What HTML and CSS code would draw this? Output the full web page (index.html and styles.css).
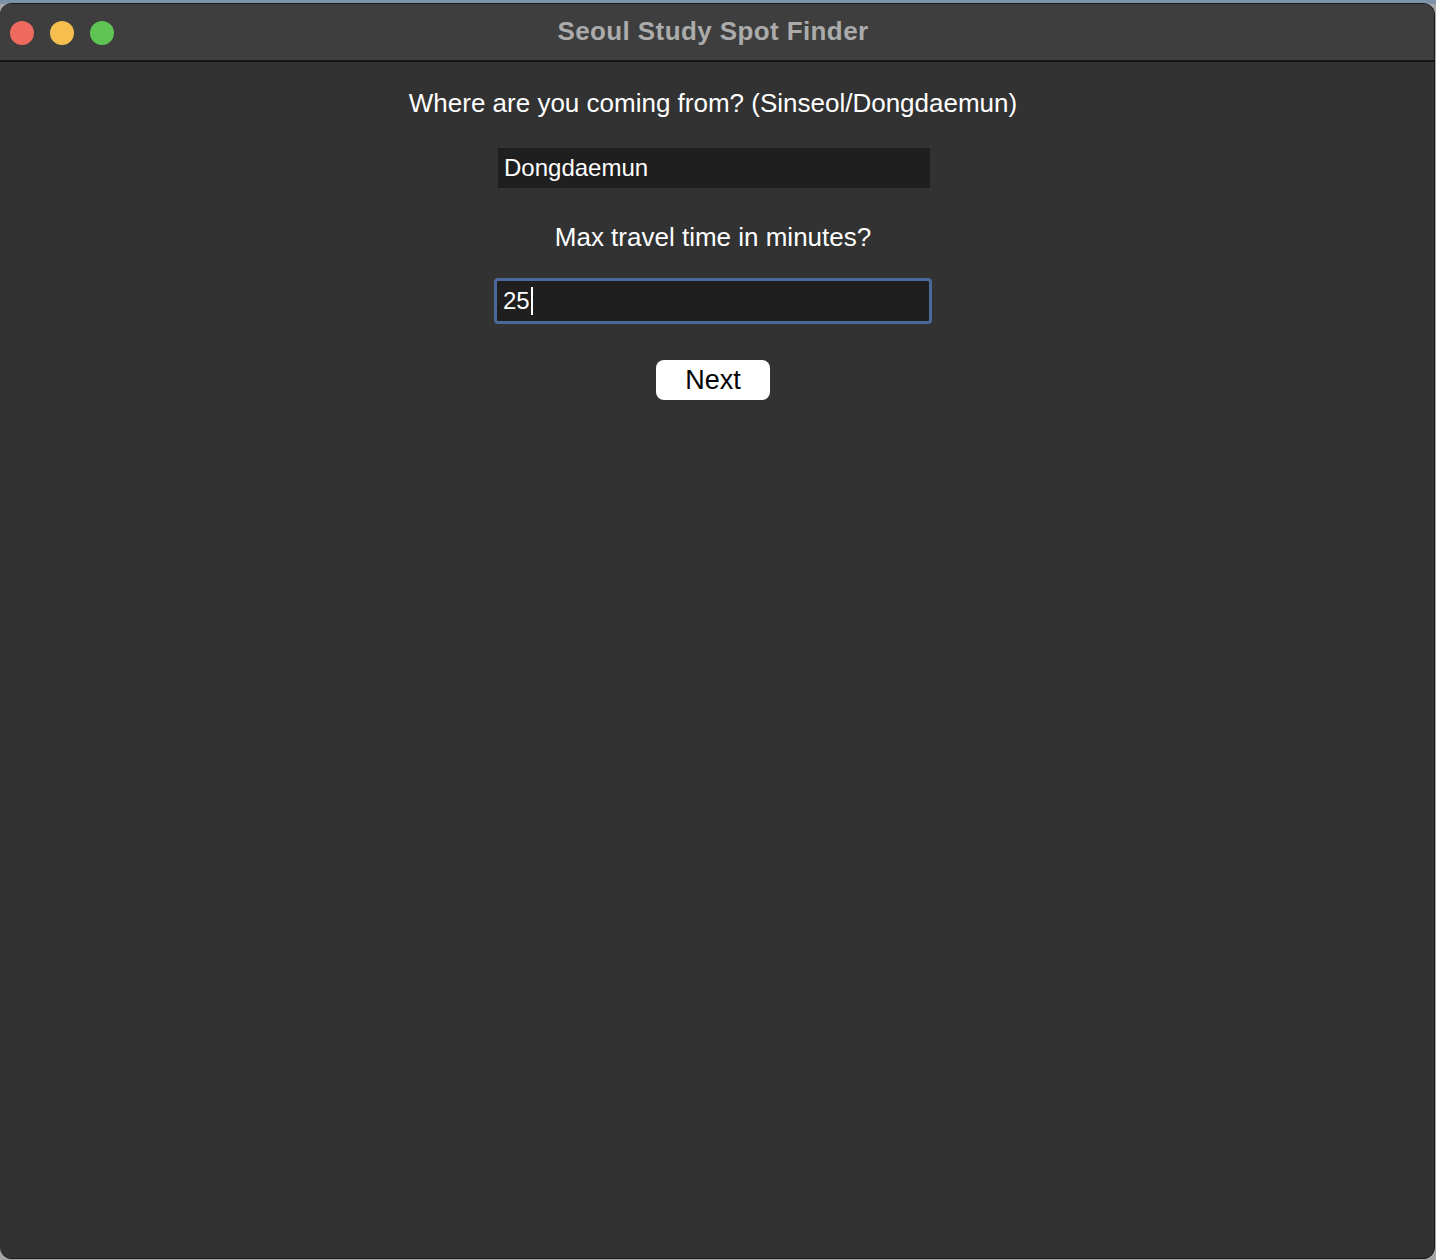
FILE: index.html
```html
<!DOCTYPE html>
<html>
<head>
<meta charset="utf-8">
<link rel="stylesheet" href="styles.css">
</head>
<body>
<div class="window">
  <div class="titlebar">
    <div class="lights">
      <span class="light red"></span>
      <span class="light yellow"></span>
      <span class="light green"></span>
    </div>
    <div class="title">Seoul Study Spot Finder</div>
  </div>
  <div class="content">
    <div class="label label-first">Where are you coming from? (Sinseol/Dongdaemun)</div>
    <div class="field">Dongdaemun</div>
    <div class="label label-second">Max travel time in minutes?</div>
    <div class="field focused">25<span class="caret"></span></div>
    <div class="button">Next</div>
  </div>
</div>
</body>
</html>
```
FILE: styles.css
```css
html, body {
  margin: 0;
  padding: 0;
}
body {
  width: 1436px;
  height: 1260px;
  background: linear-gradient(#7d93a8 0, #7d93a8 4px, #a6a6a6 4px);
  overflow: hidden;
  font-family: "Liberation Sans", Arial, sans-serif;
}
.window {
  box-sizing: border-box;
  margin-top: 3px;
  width: 1435px;
  height: 1256px;
  border: 1px solid #1a1a1a;
  border-left: none;
  border-radius: 12px;
  background: #323232;
  overflow: hidden;
  display: flex;
  flex-direction: column;
  box-shadow: inset 0 1px 0 #5a5b5a;
}
.titlebar {
  position: relative;
  height: 56px;
  flex: none;
  background: #3d3e3d;
  border-bottom: 2px solid #151515;
  display: flex;
  align-items: center;
  justify-content: center;
}
.lights {
  position: absolute;
  left: 10px;
  top: 17px;
  display: flex;
  gap: 16px;
}
.light {
  width: 24px;
  height: 24px;
  border-radius: 50%;
}
.red { background: #ee6a5f; }
.yellow { background: #f5be4f; }
.green { background: #5fc454; }
.title {
  color: #ababab;
  font-weight: bold;
  font-size: 26px;
  margin-left: -8px;
  margin-top: -2px;
  letter-spacing: 0.4px;
}
.content {
  display: flex;
  flex-direction: column;
  align-items: center;
  padding-right: 8px;
  color: #ffffff;
}
.label {
  font-size: 26px;
  line-height: 28px;
}
.label-first {
  margin-top: 27px;
}
.field {
  box-sizing: border-box;
  width: 432px;
  height: 40px;
  margin-top: 31px;
  margin-left: 2px;
  background: #1f1f1f;
  font-size: 24px;
  line-height: 40px;
  padding-left: 6px;
  display: flex;
  align-items: center;
}
.label-second {
  margin-top: 35px;
}
.focused {
  width: 438px;
  height: 46px;
  margin-top: 27px;
  margin-left: 0;
  border: 3px solid #4a6898;
  border-radius: 4px;
  padding-left: 6px;
}
.caret {
  display: inline-block;
  width: 2px;
  height: 28px;
  background: #ffffff;
  margin-left: 1px;
}
.button {
  box-sizing: border-box;
  width: 114px;
  height: 40px;
  margin-top: 36px;
  background: #ffffff;
  color: #000000;
  border-radius: 8px;
  font-size: 27px;
  line-height: 40px;
  text-align: center;
}
```
